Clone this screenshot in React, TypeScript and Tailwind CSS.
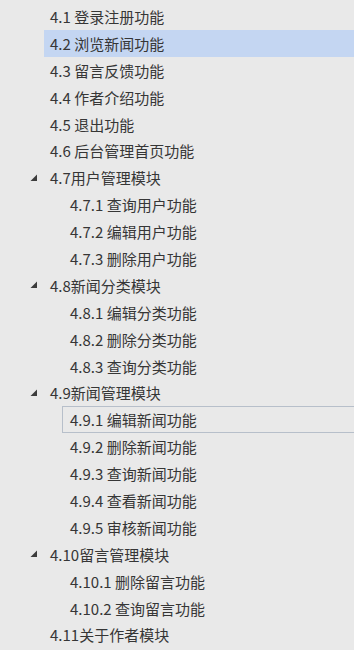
import React from "react";

type Item = { label: string; level: 0 | 1; group?: boolean; state?: "hover" | "selected" };

const items: Item[] = [
  { label: "4.1 登录注册功能", level: 0 },
  { label: "4.2 浏览新闻功能", level: 0, state: "hover" },
  { label: "4.3 留言反馈功能", level: 0 },
  { label: "4.4 作者介绍功能", level: 0 },
  { label: "4.5 退出功能", level: 0 },
  { label: "4.6 后台管理首页功能", level: 0 },
  { label: "4.7用户管理模块", level: 0, group: true },
  { label: "4.7.1 查询用户功能", level: 1 },
  { label: "4.7.2 编辑用户功能", level: 1 },
  { label: "4.7.3 删除用户功能", level: 1 },
  { label: "4.8新闻分类模块", level: 0, group: true },
  { label: "4.8.1 编辑分类功能", level: 1 },
  { label: "4.8.2 删除分类功能", level: 1 },
  { label: "4.8.3 查询分类功能", level: 1 },
  { label: "4.9新闻管理模块", level: 0, group: true },
  { label: "4.9.1 编辑新闻功能", level: 1, state: "selected" },
  { label: "4.9.2 删除新闻功能", level: 1 },
  { label: "4.9.3 查询新闻功能", level: 1 },
  { label: "4.9.4 查看新闻功能", level: 1 },
  { label: "4.9.5 审核新闻功能", level: 1 },
  { label: "4.10留言管理模块", level: 0, group: true },
  { label: "4.10.1 删除留言功能", level: 1 },
  { label: "4.10.2 查询留言功能", level: 1 },
  { label: "4.11关于作者模块", level: 0 },
];

function Caret() {
  return (
    <svg width="8" height="8" viewBox="0 0 8 8" className="shrink-0">
      <polygon points="7,0.5 7,7 0.5,7" fill="#3c3c3c" />
    </svg>
  );
}

export default function App() {
  return (
    <div
      className="w-[354px] h-[650px] overflow-hidden bg-[#e9e9e9] pt-[3px] text-[#363636] text-[15px]"
      style={{ fontFamily: '"Segoe UI", "Noto Sans CJK SC", "Open Sans", sans-serif' }}
    >
      {items.map((it) => (
        <div key={it.label} className="h-[26.9px] flex items-center">
          <div className="w-[30px] shrink-0" />
          <div className="w-[14px] shrink-0 flex items-center">{it.group && <Caret />}</div>
          <div
            className={
              "flex-1 h-full flex items-center " +
              (it.level === 1 ? "ml-[18px] " : "") +
              (it.state === "hover"
                ? "bg-[#c4d6f2] "
                : it.state === "selected"
                ? "border border-[#b7bfca] border-r-0 "
                : "")
            }
          >
            <span
              className={
                "whitespace-nowrap leading-none " +
                (it.state === "selected" ? "pl-[7px]" : it.level === 1 ? "pl-[8px]" : "pl-[6px]")
              }
            >
              {it.label}
            </span>
          </div>
        </div>
      ))}
    </div>
  );
}
